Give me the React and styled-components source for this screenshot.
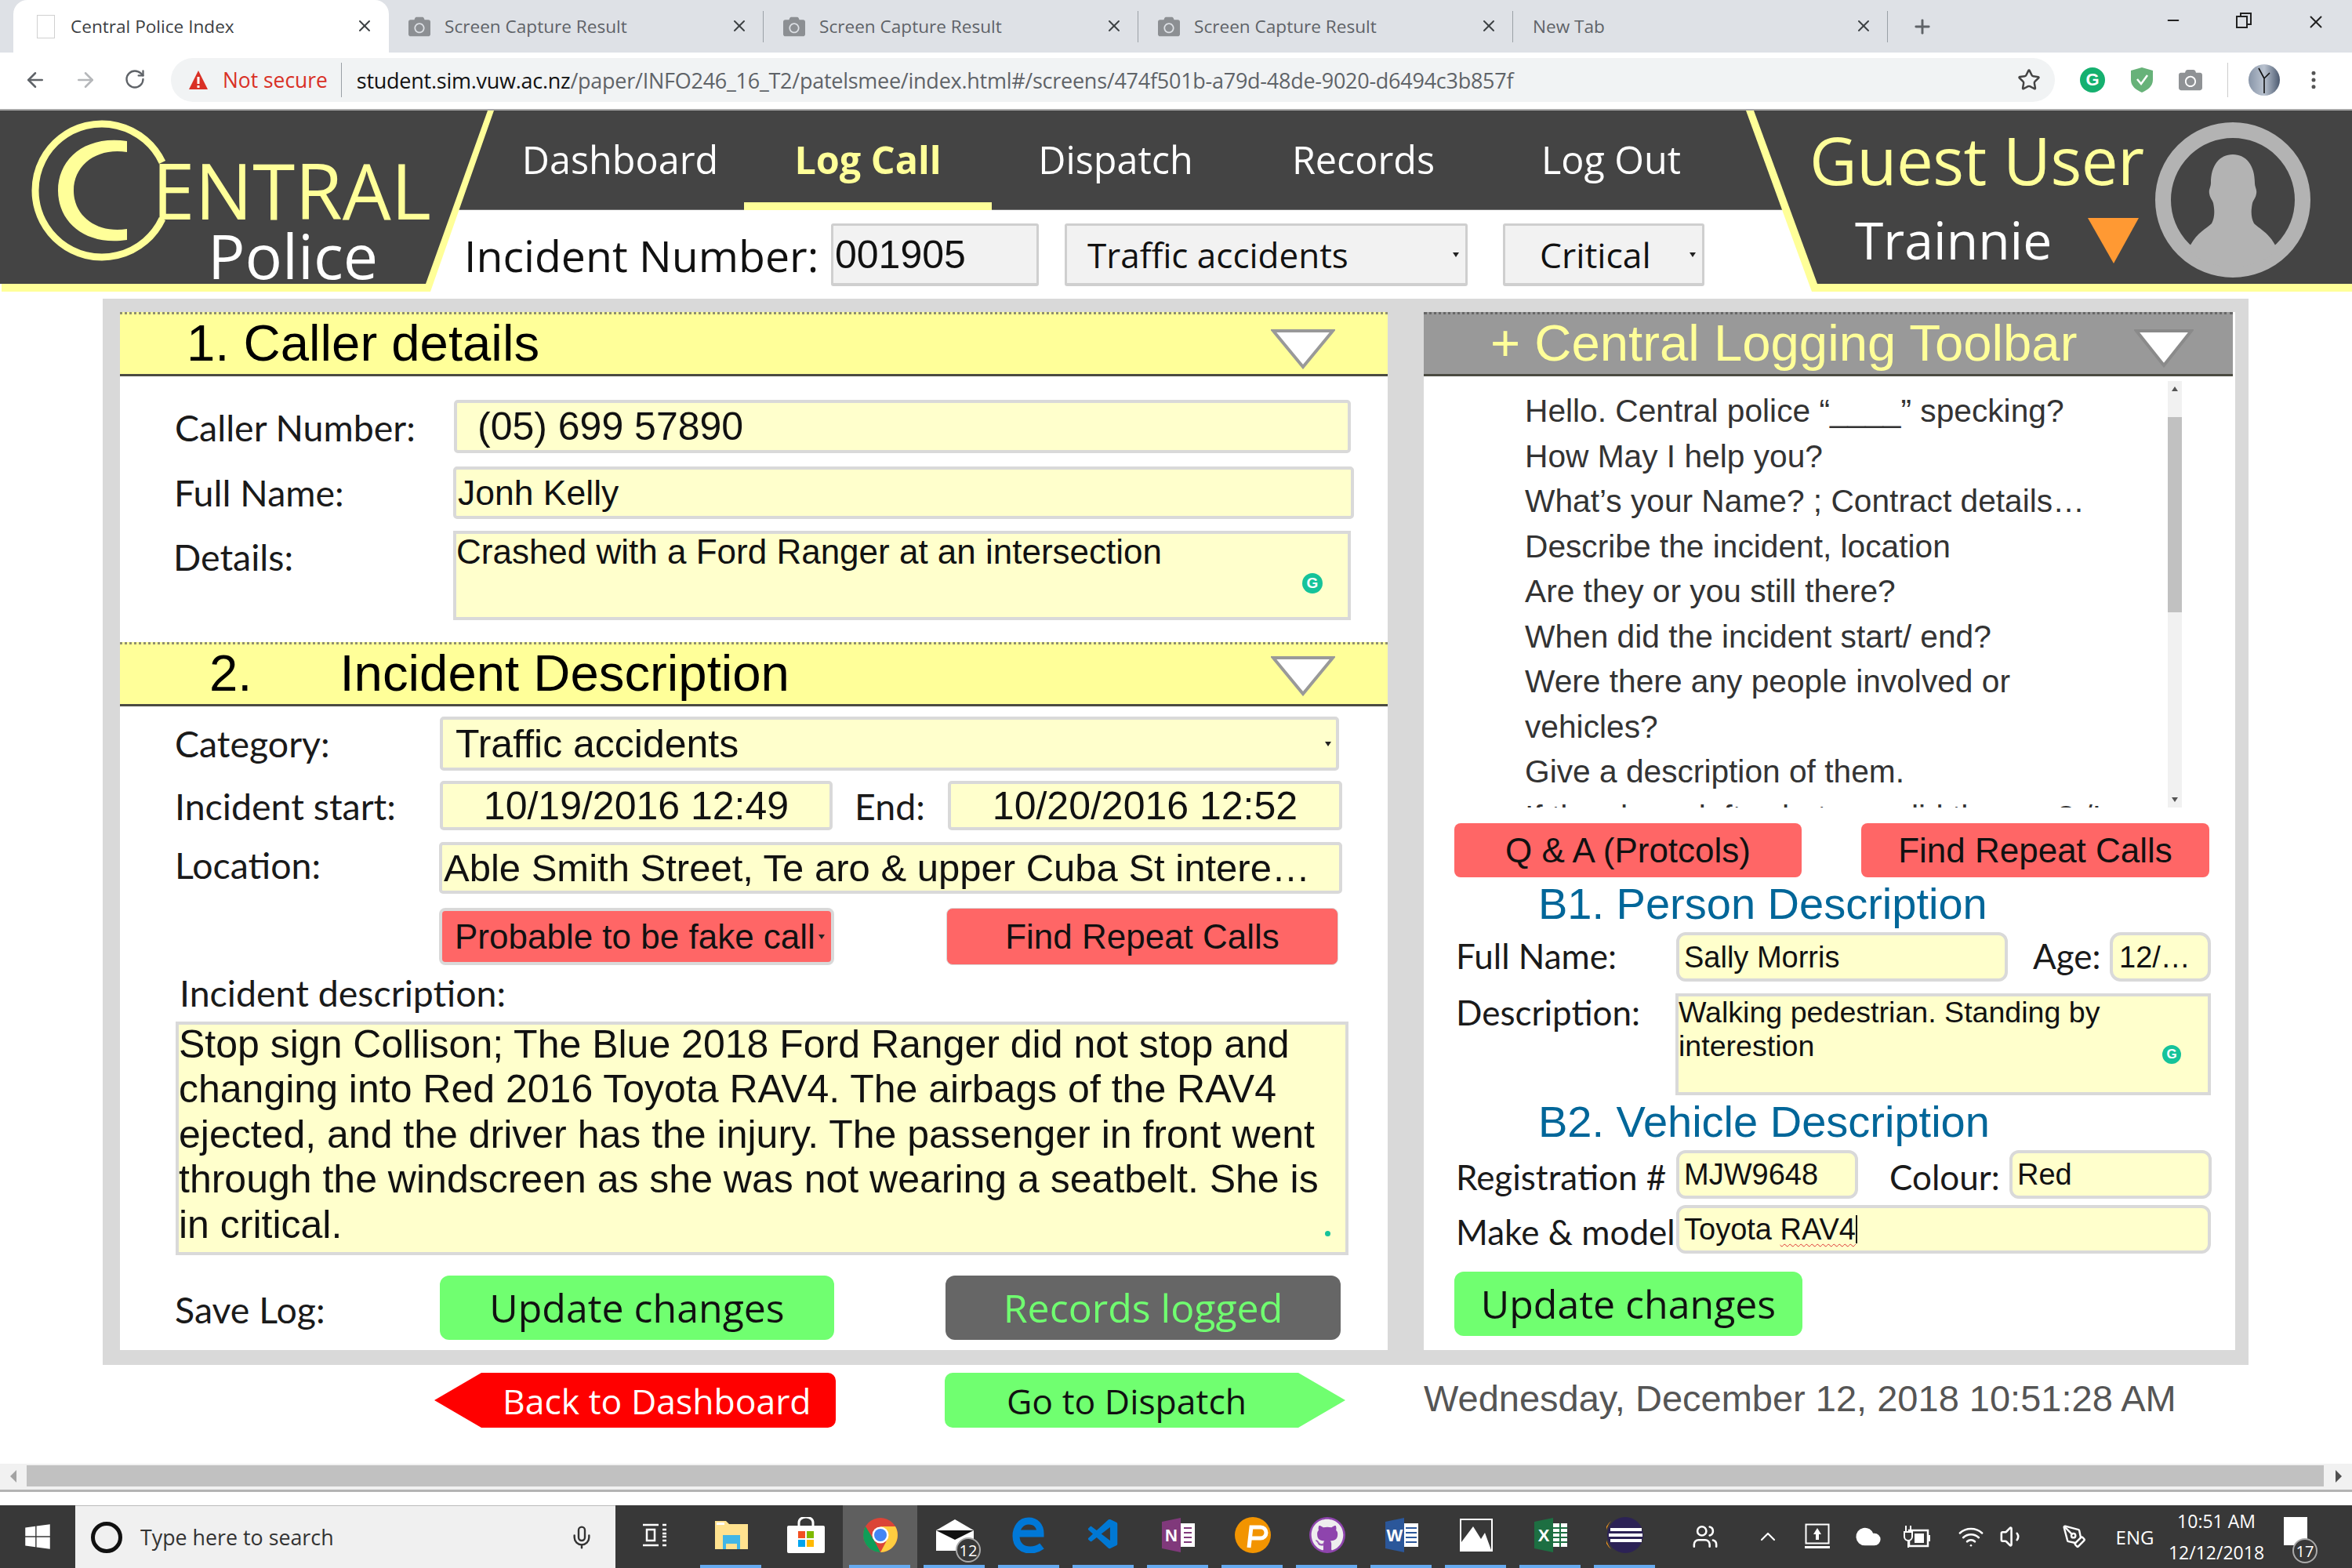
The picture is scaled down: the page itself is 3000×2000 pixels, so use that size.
import React from "react";
import styled, { createGlobalStyle } from "styled-components";
import { ArrowLeft, ArrowRight, RotateCw, Star, MoreVertical, Mic, Minus, Plus, X, Users, ChevronUp, Cloud, Wifi, Volume1, PenTool } from "lucide-react";
import { FaCamera, FaWindows, FaGithub } from "react-icons/fa";
import { VscVscode } from "react-icons/vsc";

const Y = "#ffff99";
const DARK = "#444444";
const SANS = '"Liberation Sans", Arial, sans-serif';
const OPEN = '"Open Sans", "Noto Sans", sans-serif';
const LATO = 'Lato, "Open Sans", sans-serif';

const Global = createGlobalStyle`
  html, body { margin: 0; padding: 0; background: #fff; width: 3000px; height: 2000px; overflow: hidden; }
  * { box-sizing: border-box; }
`;

const Page = styled.div`
  width: 3000px; height: 2000px; display: flex; flex-direction: column; overflow: hidden; background: #fff; font-family: ${SANS};
`;

/* browser chrome */
const TabStrip = styled.div`
  height: 67px; background: #dee1e6; display: flex; padding-left: 17px; position: relative; align-items: stretch;
`;
const Tab = styled.div`
  width: ${p => p.$w || 478}px; display: flex; align-items: center; padding: 0 0 0 ${p => p.$active ? 27 : 25}px; position: relative;
  background: ${p => p.$active ? "#fff" : "transparent"};
  border-radius: ${p => p.$active ? "18px 18px 0 0" : "0"};
  font: 400 22.6px ${OPEN}; color: ${p => p.$active ? "#3c4043" : "#5f6368"}; white-space: nowrap;
  ${p => p.$sep ? `&::after { content: ""; position: absolute; right: 0; top: 14px; height: 40px; width: 1px; background: #9aa0a6; }` : ""}
`;
const TabIconSlot = styled.span`
  width: 28px; height: 30px; margin-right: 18px; display: flex; align-items: center; justify-content: center; color: #8c8f93; flex: none;
`;
const TabPage = styled.span`
  width: 23px; height: 30px; background: #fff; border: 1px solid #d0d0d0; display: block;
`;
const TabClose = styled.span`
  position: absolute; right: 19px; top: 21px; display: flex; color: #3c4043;
`;
const NewTab = styled.span`
  width: 90px; display: flex; align-items: center; padding-left: 30px; color: #5f6368;
`;
const WinButtons = styled.div`
  margin-left: auto; display: flex; align-items: flex-start; padding-top: 15px; padding-right: 33px; gap: 68px; color: #222;
`;
const Toolbar = styled.div`
  height: 74px; display: flex; align-items: center; background: #fff; border-bottom: 2px solid #a8a8a8; padding-bottom: 2px;
`;
const NavIcons = styled.div`
  width: 218px; display: flex; padding-left: 30px; gap: 34px; color: #5f6368; flex: none;
`;
const Omni = styled.div`
  width: 2403px; height: 56px; border-radius: 28px; background: #f1f3f4; display: flex; align-items: center; padding-left: 22px; font: 400 27px ${OPEN}; position: relative; white-space: nowrap;
`;
const NotSecure = styled.span`
  color: #d93025; margin-left: 18px; padding-right: 17px; border-right: 1px solid #9aa0a6; font-size: 26.4px; line-height: 30px; height: 44px; display: flex; align-items: center;
`;
const Url = styled.span`
  color: #5f6368; margin-left: 19px; letter-spacing: -0.26px; b { color: #111; font-weight: 400; }
`;
const OmniStar = styled.span`
  position: absolute; right: 18px; top: 13px; display: flex; color: #444;
`;
const Extensions = styled.div`
  display: flex; align-items: center; gap: 32px; padding-left: 32px;
`;
const ExtBadge = styled.span`
  width: 32px; height: 32px; border-radius: 50%; background: ${p => p.$c}; color: #fff; display: flex; align-items: center; justify-content: center; font: 700 22px ${SANS};
`;
const ExtDivider = styled.span`
  width: 1px; height: 44px; background: #ccc; margin: 0 -14px 0 0;
`;
const Profile = styled.span`
  width: 40px; height: 40px; border-radius: 50%; background: linear-gradient(90deg, #8895a8, #b9c2cf 50%, #4c5a70); display: flex; align-items: center; justify-content: center; color: #111; margin-left: 8px; margin-right: -4px;
`;

/* app header */
const Header = styled.header`
  display: flex; height: 231px; flex: none;
`;
const LogoBlock = styled.div`
  width: 632px; margin-right: -72px; flex: none; position: relative; z-index: 2; background: ${Y};
  clip-path: polygon(0 0, 630px 0, 549px 231px, 2px 231px, 2px 221px, 0 221px);
  &::before { content: ""; position: absolute; inset: 0; background: ${DARK}; clip-path: polygon(0 0, 622px 0, 543px 221px, 0 221px); }
`;
const LogoMark = styled.svg`
  position: absolute; left: 32px; top: 5px; width: 190px; height: 190px;
`;
const LogoEntral = styled.div`
  position: absolute; left: 194px; top: 61px; font: 400 98px/80px ${OPEN}; color: ${Y};
`;
const LogoPolice = styled.div`
  position: absolute; left: 265px; top: 145px; font: 400 79px/80px ${OPEN}; color: #fff;
`;
const Middle = styled.div`
  width: 1715px; flex: none; display: flex; flex-direction: column;
`;
const Nav = styled.nav`
  height: 127px; background: ${DARK}; border-bottom: 1px solid #777; display: flex; padding-left: 73px;
`;
const NavItem = styled.div`
  width: 316px; height: 127px; display: flex; align-items: flex-start; justify-content: center; padding-top: 28px;
  font: ${p => p.$active ? 700 : 400} 48.5px/68px ${OPEN}; color: ${p => p.$active ? Y : "#fff"};
  border-bottom: ${p => p.$active ? `10px solid ${Y}` : "none"};
`;
const IncidentRow = styled.div`
  height: 104px; display: flex; align-items: center; padding: 10px 0 0 32px;
`;
const IncidentLabel = styled.div`
  width: 468px; font: 400 55.4px ${OPEN}; color: #111; white-space: nowrap;
`;
const GreyBox = styled.div`
  width: ${p => p.$w}px; height: 80px; margin-left: ${p => p.$ml || 0}px; background: #f2f2f2; border: 3px solid #cfcfcf; border-bottom-width: 4px; border-radius: 3px;
  display: flex; align-items: center; padding-left: ${p => p.$pl}px; font: 400 ${p => p.$fs}px ${p => p.$font}; color: #111; position: relative; white-space: nowrap;
`;
const Caret = styled.span`
  position: absolute; right: ${p => p.$r || 8}px; top: 50%; margin-top: -3px; width: 0; height: 0;
  border-left: 4px solid transparent; border-right: 4px solid transparent; border-top: 6px solid #222;
`;
const UserBlock = styled.div`
  width: 773px; margin-left: -48px; flex: none; position: relative; z-index: 2; display: flex; padding: 14px 0 0 81px; background: ${Y};
  clip-path: polygon(0 0, 773px 0, 773px 231px, 84px 231px);
  &::before { content: ""; position: absolute; inset: 0; background: ${DARK}; clip-path: polygon(10px 0, 773px 0, 773px 221px, 91px 221px); }
`;
const UserText = styled.div`
  width: 441px; flex: none; position: relative; display: flex; flex-direction: column; margin-top: -4px;
`;
const GuestName = styled.div`
  font: 400 83.5px/106px ${OPEN}; color: ${Y}; white-space: nowrap; letter-spacing: -0.5px;
`;
const RoleRow = styled.div`
  display: flex; align-items: center; padding-left: 58px; margin-top: 2px;
`;
const Role = styled.div`
  font: 400 66px/92px ${OPEN}; color: #fff; width: 297px;
`;
const TriangleBadge = styled.svg`
  width: 65px; height: 58px; flex: none; margin-top: 4px;
`;
const Avatar = styled.svg`
  width: 198px; height: 200px; flex: none; position: relative;
`;

/* main panel */
const Panel = styled.main`
  margin: 9px 0 0 131px; width: 2737px; height: 1360px; padding: 17px 17px 19px 22px; background: #d9d9d9; display: grid; grid-template-columns: 1617px 1035px; column-gap: 46px; flex: none;
`;
const Card = styled.section`
  background: #fff; display: flex; flex-direction: column; height: 1324px; overflow: hidden;
`;
const SectionBar = styled.div`
  height: 82px; margin-top: ${p => p.$mt || 0}px; flex: none; display: flex; align-items: center; position: relative;
  background: ${p => p.$grey ? "#999999" : Y}; border-top: 3px dotted ${p => p.$grey ? "#666" : "#8f8f70"}; border-bottom: 3px solid #4b4b42;
  font: 400 65.3px/76px ${SANS}; color: ${p => p.$grey ? Y : "#000"}; padding: 0 0 3px ${p => p.$pl}px; white-space: pre;
  width: ${p => p.$w ? p.$w + "px" : "auto"};
`;
const SectionGap = styled.span`
  display: inline-block; width: ${p => p.$w}px;
`;
const Chevron = styled.svg`
  position: absolute; left: ${p => p.$x}px; top: ${p => p.$y}px; width: ${p => p.$w}px; height: ${p => p.$h}px;
`;
const Row = styled.div`
  display: flex; align-items: ${p => p.$top ? "flex-start" : "center"}; height: ${p => p.$h}px; margin-top: ${p => p.$mt}px; margin-left: ${p => p.$ml || 0}px; flex: none;
`;
const Label = styled.div`
  width: ${p => p.$w}px; padding-left: ${p => p.$pl || 0}px; margin-left: ${p => p.$ml || 0}px; margin-top: ${p => p.$top || 0}px; flex: none; font: 400 ${p => p.$fs || 46.5}px/56px ${LATO}; color: #1a1a1a; white-space: nowrap;
`;
const Field = styled.div`
  width: ${p => p.$w}px; height: ${p => p.$h ? p.$h + "px" : "100%"}; margin-left: ${p => p.$ml || 0}px; flex: none; position: relative;
  background: #ffffcc; border: 4px solid #d9d9d9; border-radius: ${p => p.$square ? 0 : (p.$r || 5)}px;
  display: ${p => p.$block ? "block" : "flex"}; align-items: center; justify-content: ${p => p.$center ? "center" : "flex-start"};
  padding-left: ${p => p.$pl ?? 8}px; padding-right: ${p => p.$pr || 4}px;
  font: 400 ${p => p.$fs || 50}px/${p => p.$lh || 60}px ${SANS}; color: #111; white-space: ${p => p.$wrap ? "normal" : "nowrap"}; overflow: hidden;
`;
const FieldBody = styled.div`
  margin-top: ${p => p.$mt}px;
`;
const Ellipsis = styled.span`
  overflow: hidden; text-overflow: ellipsis; white-space: nowrap; display: block; width: 100%;
`;
const GrammarDot = styled.span`
  position: absolute; right: ${p => p.$r}px; top: ${p => p.$t}px; width: ${p => p.$s}px; height: ${p => p.$s}px; border-radius: 50%; background: #15c39a; color: #fff; display: flex; align-items: center; justify-content: center; font: 700 ${p => Math.round(p.$s * 0.72)}px ${SANS};
`;
const ActionButton = styled.div`
  width: ${p => p.$w}px; height: ${p => p.$h || 73}px; margin-left: ${p => p.$ml || 0}px; flex: none; border-radius: ${p => p.$r || 8}px; position: relative;
  background: ${p => p.$bg}; color: ${p => p.$fg || "#111"}; border: ${p => p.$bd || "none"};
  display: flex; align-items: center; justify-content: ${p => p.$left ? "flex-start" : "center"}; padding-left: ${p => p.$left || 0}px;
  font: 400 ${p => p.$fs || 44}px ${p => p.$font || SANS}; white-space: nowrap;
`;
const Footer = styled.div`
  display: flex; align-items: center; height: 70px; margin-top: 10px; padding-left: 554px; flex: none;
`;
const ArrowButton = styled.div`
  height: 70px; width: ${p => p.$w}px; margin-left: ${p => p.$ml}px; flex: none; position: relative; display: flex; align-items: center;
  background: ${p => p.$bg}; color: ${p => p.$fg}; font: 400 44.5px ${OPEN}; white-space: nowrap; padding-left: ${p => p.$pl}px;
  border-radius: ${p => p.$left ? "0 10px 10px 0" : "10px 0 0 10px"};
  &::before { content: ""; position: absolute; top: 0; ${p => p.$left ? "right: 100%;" : "left: 100%;"} width: 0; height: 0;
    border-top: 35px solid transparent; border-bottom: 35px solid transparent;
    ${p => p.$left ? `border-right: 60px solid ${p.$bg};` : `border-left: 60px solid ${p.$bg};`} }
`;
const DateText = styled.div`
  margin-left: 160px; font: 400 47px ${SANS}; color: #555; white-space: nowrap; margin-top: -6px;
`;

/* script box */
const ScriptBox = styled.div`
  height: 544px; margin-top: 6px; flex: none; position: relative; overflow: hidden; padding: 10px 0 0 129px;
`;
const ScriptLine = styled.div`
  font: 400 40.7px/57.5px ${SANS}; color: #333; white-space: nowrap;
`;
const ScrollTrack = styled.div`
  position: absolute; left: 949px; top: 0; width: 18px; height: 544px; background: #f1f1f1;
`;
const ScrollThumb = styled.div`
  position: absolute; left: 0; top: 46px; width: 18px; height: 249px; background: #c1c1c1;
`;
const ScrollArrow = styled.span`
  position: absolute; left: 5px; ${p => p.$up ? "top: 7px; border-bottom: 6px solid #555;" : "bottom: 7px; border-top: 6px solid #555;"} width: 0; height: 0;
  border-left: 4px solid transparent; border-right: 4px solid transparent;
`;
const SubHead = styled.div`
  margin: ${p => p.$mt}px 0 0 146px; font: 400 56px/68px ${SANS}; color: #006699; white-space: nowrap; height: 68px; flex: none;
`;
const Caretline = styled.span`
  display: inline-block; width: 2px; height: 36px; background: #111; vertical-align: -5px;
`;
const Squiggle = styled.span`
  text-decoration: underline wavy #d33; text-decoration-thickness: 1px; text-underline-offset: 5px;
`;

/* page scrollbar + taskbar */
const HScroll = styled.div`
  height: 36px; margin-top: 46px; background: #f1f1f1; border-bottom: 3px solid #b3b3b3; display: flex; flex: none; padding: 2px 0 4px; align-items: stretch; position: relative;
`;
const HThumb = styled.div`
  margin-left: 34px; width: 2930px; background: #c1c1c1;
`;
const HArrow = styled.span`
  position: absolute; top: 8px; ${p => p.$left ? "left: 13px; border-right: 8px solid #a3a3a3;" : "right: 13px; border-left: 8px solid #505050;"}
  border-top: 8px solid transparent; border-bottom: 8px solid transparent; width: 0; height: 0;
`;
const Taskbar = styled.footer`
  height: 80px; margin-top: 17px; background: #383838; display: flex; align-items: stretch; flex: none; color: #fff;
`;
const StartCell = styled.div`
  width: 96px; display: flex; align-items: center; justify-content: center; color: #fff; flex: none;
`;
const Search = styled.div`
  width: 689px; background: #f0f0f0; border-top: 1px solid #bbb; display: flex; align-items: center; padding-left: 20px; font: 400 26.8px ${OPEN}; color: #333; position: relative; flex: none;
`;
const Cortana = styled.span`
  width: 40px; height: 40px; border-radius: 50%; border: 5px solid #111; margin-right: 23px; flex: none;
`;
const SearchMic = styled.span`
  position: absolute; right: 27px; top: 24px; display: flex; color: #333;
`;
const AppCell = styled.div`
  width: ${p => p.$w || 95}px; flex: none; display: flex; align-items: center; justify-content: center; position: relative;
  background: ${p => p.$active ? "#5f5f5f" : "transparent"};
  padding-bottom: 4px;
  ${p => p.$run ? `&::after { content: ""; position: absolute; bottom: 0; left: 8px; right: 9px; height: 4px; background: #66aaf0; }` : ""}
`;
const Disc = styled.span`
  width: 46px; height: 46px; background: #8e44ad; border-radius: 23px; color: #eee; display: flex; align-items: center; justify-content: center;
`;
const CountBadge = styled.span`
  position: absolute; right: ${p => p.$right ?? 14}px; bottom: ${p => p.$bottom ?? 7}px; width: 32px; height: 32px; border-radius: 50%; background: #383838; border: 2px solid #aaa; color: #fff; font: 400 20px ${OPEN}; display: flex; align-items: center; justify-content: center;
`;
const Tray = styled.div`
  margin-left: auto; display: flex; align-items: center; padding-right: 42px;
`;
const TrayCell = styled.div`
  width: ${p => p.$w || 50}px; margin-left: ${p => p.$ml || 0}px; height: 80px; flex: none; display: flex; align-items: center; justify-content: center; color: #fff; position: relative;
  font: 400 24px ${OPEN};
`;
const Clock = styled.div`
  font: 400 23px/40px ${OPEN}; text-align: center; color: #fff; white-space: nowrap;
`;
const Notif = styled.span`
  width: 30px; height: 36px; background: #fff; display: block; margin-top: -14px; margin-left: -10px;
`;

const Tri = ({ x, y, w, h, fill = "#fff", stroke = "#999" }) => (
  <Chevron $x={x} $y={y} $w={w} $h={h} viewBox={`0 0 ${w} ${h}`}>
    <polygon points={`3,3 ${w - 3},3 ${w / 2},${h - 3}`} fill={fill} stroke={stroke} strokeWidth="4" />
  </Chevron>
);

const ChromeLogo = () => (
  <svg width="46" height="46" viewBox="0 0 46 46">
    <circle cx="23" cy="23" r="22" fill="#db4437" />
    <path d="M23 45 A22 22 0 0 1 4 12 L15 30 Z" fill="#0f9d58" />
    <path d="M23 45 A22 22 0 0 0 42 12 L23 12 L31 30 Z" fill="#ffcd40" />
    <circle cx="23" cy="23" r="10.5" fill="#fff" />
    <circle cx="23" cy="23" r="8" fill="#4285f4" />
  </svg>
);

const Explorer = () => (
  <svg width="42" height="36" viewBox="0 0 42 36">
    <path d="M0 0h14l4 4h24v32H0z" fill="#ffe28f" />
    <rect x="2" y="2" width="10" height="3" fill="#fff" />
    <path d="M10 36V18h22v18h-4v-7H14v7z" fill="#41b6e6" />
    <rect x="10" y="18" width="22" height="8" fill="#41b6e6" />
  </svg>
);

const Store = () => (
  <svg width="48" height="46" viewBox="0 0 48 46">
    <path d="M15 12V7a9 7 0 0 1 18 0v5" fill="none" stroke="#fff" strokeWidth="3" />
    <rect x="0" y="11" width="48" height="35" fill="#fff" rx="2" />
    <rect x="14" y="18" width="9" height="9" fill="#f25022" />
    <rect x="25" y="18" width="9" height="9" fill="#7fba00" />
    <rect x="14" y="29" width="9" height="9" fill="#00a4ef" />
    <rect x="25" y="29" width="9" height="9" fill="#ffb900" />
  </svg>
);

const Mail = () => (
  <svg width="48" height="40" viewBox="0 0 48 40">
    <path d="M0 14 24 0l24 14v26H0z" fill="#fff" />
    <path d="M0 14 24 26 48 14" fill="#111" />
  </svg>
);

const EdgeE = () => (
  <svg width="44" height="46" viewBox="0 0 44 46">
    <path d="M9 21h27c0-10-6-16-15-16C11 5 5 14 5 24c0 12 8 18 18 18 6 0 11-2 15-5" fill="none" stroke="#0078d7" strokeWidth="9" />
  </svg>
);

const Eclipse = () => (
  <svg width="48" height="46" viewBox="0 0 48 46">
    <circle cx="24" cy="23" r="23" fill="#2c2255" />
    <path d="M6 5 A23 23 0 0 0 6 41 A20 24 0 0 1 6 5" fill="#f7941e" />
    <rect x="5" y="14" width="40" height="4" fill="#fff" />
    <rect x="3" y="21" width="43" height="4" fill="#fff" />
    <rect x="5" y="28" width="40" height="4" fill="#fff" />
  </svg>
);

const Photos = () => (
  <svg width="42" height="42" viewBox="0 0 42 42">
    <rect width="42" height="42" fill="#fff" />
    <rect x="2" y="2" width="38" height="6" fill="#383838" />
    <path d="M2 8h38v32l-8-22-5 8-10-16L2 30z" fill="#383838" />
  </svg>
);

const DocIcon = ({ bg, letter, rows }) => (
  <svg width="42" height="44" viewBox="0 0 42 44">
    <path d="M0 5 24 0v44L0 39z" fill={bg} />
    <rect x="24" y="7" width="18" height="30" fill="#fff" />
    <path d={rows} stroke={bg} strokeWidth="2" />
    <text x="12" y="30" fontSize="22" fontFamily="Liberation Sans" fontWeight="700" fill="#fff" textAnchor="middle">{letter}</text>
  </svg>
);

const Orange = () => (
  <svg width="46" height="48" viewBox="0 0 46 48">
    <circle cx="23" cy="24" r="23" fill="#f29400" />
    <path d="M18 40 21 14h12a6 6 0 0 1 0 14H21" fill="none" stroke="#fff" strokeWidth="5" />
  </svg>
);

const UploadTray = () => (
  <svg width="32" height="34" viewBox="0 0 32 34">
    <rect x="1.5" y="1.5" width="29" height="24" fill="none" stroke="#fff" strokeWidth="2" />
    <path d="M16 6l5 8h-3v7h-4v-7h-3z" fill="#fff" />
    <rect x="0" y="29" width="32" height="3" fill="#fff" />
  </svg>
);

const Battery = () => (
  <svg width="36" height="36" viewBox="0 0 36 36">
    <rect x="8" y="10" width="24" height="20" fill="none" stroke="#fff" strokeWidth="2.5" />
    <rect x="32" y="16" width="3" height="8" fill="#fff" />
    <path d="M2 12h10v6a5 5 0 0 1-10 0zM4 4v8M10 4v8M7 22v10" stroke="#fff" strokeWidth="2" fill="#383838" />
    <rect x="15" y="14" width="12" height="12" fill="#fff" />
  </svg>
);

const Logo = () => (
  <LogoMark viewBox="0 0 190 190">
    <path d="M175 61 A85 85 0 1 0 175 133" fill="none" stroke={Y} strokeWidth="9" />
    <path d="M130 34 C 75 26 42 58 42 97 C 42 136 75 168 130 160 L 130 146 C 92 152 62 130 62 97 C 62 64 92 42 130 48 Z" fill={Y} />
  </LogoMark>
);

const AvatarArt = () => (
  <Avatar viewBox="0 0 198 200">
    <defs><clipPath id="avatarClip"><circle cx="99" cy="100" r="86" /></clipPath></defs>
    <circle cx="99" cy="100" r="89" fill="none" stroke="#b3b3b3" strokeWidth="20" />
    <path clipPath="url(#avatarClip)" d="M99 42 C 116 42 127 56 127 78 C 127 84 130 86 129 92 C 128 98 125 100 124 104 C 122 114 122 122 126 130 C 134 138 154 146 159 176 L 159 200 L 39 200 L 39 176 C 44 146 64 138 72 130 C 76 122 76 114 74 104 C 73 100 70 98 69 92 C 68 86 71 84 71 78 C 71 56 82 42 99 42 Z" fill="#b3b3b3" />
  </Avatar>
);

export default function App() {
  return (
    <Page>
      <Global />
      <TabStrip>
        <Tab $active $w={479}>
          <TabIconSlot><TabPage /></TabIconSlot>Central Police Index
          <TabClose><X size={24} strokeWidth={2} /></TabClose>
        </Tab>
        <Tab $sep><TabIconSlot><FaCamera size={28} /></TabIconSlot>Screen Capture Result<TabClose><X size={24} strokeWidth={2} /></TabClose></Tab>
        <Tab $sep><TabIconSlot><FaCamera size={28} /></TabIconSlot>Screen Capture Result<TabClose><X size={24} strokeWidth={2} /></TabClose></Tab>
        <Tab $sep><TabIconSlot><FaCamera size={28} /></TabIconSlot>Screen Capture Result<TabClose><X size={24} strokeWidth={2} /></TabClose></Tab>
        <Tab $sep>New Tab<TabClose><X size={24} strokeWidth={2} /></TabClose></Tab>
        <NewTab><Plus size={28} strokeWidth={2.5} /></NewTab>
        <WinButtons>
          <Minus size={22} strokeWidth={2} />
          <svg width="22" height="22" viewBox="0 0 22 22"><rect x="2" y="6" width="13" height="14" fill="none" stroke="#222" strokeWidth="2" /><path d="M7 6V2h13v14h-5" fill="none" stroke="#222" strokeWidth="2" /></svg>
          <X size={26} strokeWidth={1.8} />
        </WinButtons>
      </TabStrip>
      <Toolbar>
        <NavIcons>
          <ArrowLeft size={30} />
          <ArrowRight size={30} color="#b5b7ba" />
          <RotateCw size={28} />
        </NavIcons>
        <Omni>
          <svg width="26" height="26" viewBox="0 0 26 26"><path d="M13 1 25 25H1z" fill="#d93025" /><rect x="11.5" y="9" width="3" height="9" fill="#fff" /><rect x="11.5" y="20" width="3" height="3" fill="#fff" /></svg>
          <NotSecure>Not secure</NotSecure>
          <Url><b>student.sim.vuw.ac.nz</b>/paper/INFO246_16_T2/patelsmee/index.html#/screens/474f501b-a79d-48de-9020-d6494c3b857f</Url>
          <OmniStar><Star size={30} strokeWidth={2} /></OmniStar>
        </Omni>
        <Extensions>
          <ExtBadge $c="#15b06f">G</ExtBadge>
          <svg width="30" height="34" viewBox="0 0 30 34"><path d="M15 1 29 5v12c0 8-7 13-14 16C8 30 1 25 1 17V5z" fill="#67b279" /><path d="M9 16l5 6 8-11" fill="none" stroke="#fff" strokeWidth="2.5" /></svg>
          <FaCamera size={30} color="#8f9295" />
          <ExtDivider />
          <Profile><svg width="28" height="36" viewBox="0 0 28 36"><path d="M14 16 7 3M14 16 21 9M14 16v19" stroke="#111" strokeWidth="1.6" /></svg></Profile>
          <MoreVertical size={30} color="#555" />
        </Extensions>
      </Toolbar>

      <Header>
        <LogoBlock>
          <Logo />
          <LogoEntral>ENTRAL</LogoEntral>
          <LogoPolice>Police</LogoPolice>
        </LogoBlock>
        <Middle>
          <Nav>
            <NavItem>Dashboard</NavItem>
            <NavItem $active>Log Call</NavItem>
            <NavItem>Dispatch</NavItem>
            <NavItem>Records</NavItem>
            <NavItem>Log Out</NavItem>
          </Nav>
          <IncidentRow>
            <IncidentLabel>Incident Number:</IncidentLabel>
            <GreyBox $w={265} $pl={2} $fs={50} $font={SANS}>001905</GreyBox>
            <GreyBox $w={514} $ml={33} $pl={26} $fs={44} $font={OPEN}>Traffic accidents<Caret /></GreyBox>
            <GreyBox $w={257} $ml={45} $pl={44} $fs={44.5} $font={OPEN}>Critical<Caret /></GreyBox>
          </IncidentRow>
        </Middle>
        <UserBlock>
          <UserText>
            <GuestName>Guest User</GuestName>
            <RoleRow>
              <Role>Trainnie</Role>
              <TriangleBadge viewBox="0 0 65 58"><polygon points="0,0 65,0 33,58" fill="#ff9933" /></TriangleBadge>
            </RoleRow>
          </UserText>
          <AvatarArt />
        </UserBlock>
      </Header>

      <Panel>
        <Card>
          <SectionBar $pl={85}>1. Caller details<Tri x={1468} y={18} w={82} h={52} /></SectionBar>
          <Row $h={68} $mt={30}>
            <Label $w={426} $pl={70} $top={2}>Caller Number:</Label>
            <Field $w={1144} $pl={26} $fs={50}>(05) 699 57890</Field>
          </Row>
          <Row $h={67} $mt={17}>
            <Label $w={425} $pl={69} $top={-2}>Full Name:</Label>
            <Field $w={1149} $pl={2} $fs={44.5}>Jonh Kelly</Field>
          </Row>
          <Row $h={114} $mt={15} $top>
            <Label $w={425} $pl={68} $top={5}>Details:</Label>
            <Field $w={1145} $h={114} $square $block $wrap $pl={0} $fs={44} $lh={48}>
              <FieldBody $mt={-1}>Crashed with a Ford Ranger at an intersection</FieldBody>
              <GrammarDot $r={32} $t={50} $s={26}>G</GrammarDot>
            </Field>
          </Row>
          <SectionBar $mt={28} $pl={114}>2.<SectionGap $w={112} />Incident Description<Tri x={1468} y={14} w={82} h={52} /></SectionBar>
          <Row $h={69} $mt={13}>
            <Label $w={408} $pl={70} $top={-2}>Category:</Label>
            <Field $w={1147} $pl={16} $fs={50}>Traffic accidents<Caret $r={6} /></Field>
          </Row>
          <Row $h={63} $mt={13}>
            <Label $w={408} $pl={70}>Incident start:</Label>
            <Field $w={501} $center $pl={4} $pr={0} $fs={50}>10/19/2016 12:49</Field>
            <Label $w={119} $ml={28}>End:</Label>
            <Field $w={503} $center $pl={4} $pr={0} $fs={50}>10/20/2016 12:52</Field>
          </Row>
          <Row $h={66} $mt={15}>
            <Label $w={407} $pl={70} $top={-8}>Location:</Label>
            <Field $w={1152} $pl={2} $pr={28} $fs={49}><Ellipsis>Able Smith Street, Te aro &amp; upper Cuba St interection</Ellipsis></Field>
          </Row>
          <Row $h={73} $mt={18} $ml={407}>
            <ActionButton $w={504} $bg="#ff6666" $bd="4px solid #d9d9d9" $left={16}>Probable to be fake call<Caret $r={8} /></ActionButton>
            <ActionButton $w={500} $ml={143} $bg="#ff6666" $bd="1px solid #d9d9d9">Find Repeat Calls</ActionButton>
          </Row>
          <Row $h={54} $mt={11}>
            <Label $w={800} $pl={76} $top={-6}>Incident description:</Label>
          </Row>
          <Row $h={298} $mt={7} $ml={71}>
            <Field $w={1496} $square $block $wrap $pl={0} $pr={0} $fs={50} $lh={57.4}>
              <FieldBody $mt={-3}>Stop sign Collison; The Blue 2018 Ford Ranger did not stop and changing into Red 2016 Toyota RAV4. The airbags of the RAV4 ejected, and the driver has the injury. The passenger in front went through the windscreen as she was not wearing a seatbelt. She is in critical.</FieldBody>
              <GrammarDot $r={19} $t={263} $s={7} />
            </Field>
          </Row>
          <Row $h={82} $mt={26}>
            <Label $w={408} $pl={70} $top={4}>Save Log:</Label>
            <ActionButton $w={503} $h={82} $r={12} $bg="#70ff70" $font={OPEN} $fs={50}>Update changes</ActionButton>
            <ActionButton $w={504} $h={82} $r={12} $ml={142} $bg="#666666" $fg="#70ff70" $font={OPEN} $fs={50}>Records logged</ActionButton>
          </Row>
        </Card>

        <Card>
          <SectionBar $grey $w={1032} $pl={85}>+ Central Logging Toolbar<Tri x={906} y={18} w={76} h={50} stroke="#8a8a8a" /></SectionBar>
          <ScriptBox>
            <ScriptLine>Hello. Central police “____” specking?</ScriptLine>
            <ScriptLine>How May I help you?</ScriptLine>
            <ScriptLine>What’s your Name? ; Contract details…</ScriptLine>
            <ScriptLine>Describe the incident, location</ScriptLine>
            <ScriptLine>Are they or you still there?</ScriptLine>
            <ScriptLine>When did the incident start/ end?</ScriptLine>
            <ScriptLine>Were there any people involved or</ScriptLine>
            <ScriptLine>vehicles?</ScriptLine>
            <ScriptLine>Give a description of them.</ScriptLine>
            <ScriptLine>If they have left, what way did they go? /I</ScriptLine>
            <ScrollTrack>
              <ScrollArrow $up />
              <ScrollThumb />
              <ScrollArrow />
            </ScrollTrack>
          </ScriptBox>
          <Row $h={69} $mt={20} $ml={39}>
            <ActionButton $w={443} $h={69} $bg="#ff6666">Q &amp; A (Protcols)</ActionButton>
            <ActionButton $w={444} $h={69} $ml={76} $bg="#ff6666">Find Repeat Calls</ActionButton>
          </Row>
          <SubHead $mt={0}>B1. Person Description</SubHead>
          <Row $h={63} $mt={2}>
            <Label $w={322} $pl={41} $fs={44} $top={-4}>Full Name:</Label>
            <Field $w={423} $r={12} $pl={6} $fs={38} $lh={46}>Sally Morris</Field>
            <Label $w={98} $ml={32} $fs={44} $top={-4}>Age:</Label>
            <Field $w={129} $r={14} $fs={38} $lh={46}>12/…</Field>
          </Row>
          <Row $h={130} $mt={15} $top>
            <Label $w={321} $pl={41} $fs={44} $top={-4}>Description:</Label>
            <Field $w={683} $h={130} $square $block $wrap $pl={0} $fs={37.6} $lh={43}>
              <FieldBody $mt={-1}>Walking pedestrian. Standing by interestion</FieldBody>
              <GrammarDot $r={34} $t={62} $s={24}>G</GrammarDot>
            </Field>
          </Row>
          <SubHead $mt={0}>B2. Vehicle Description</SubHead>
          <Row $h={62} $mt={2}>
            <Label $w={322} $pl={41} $fs={44} $top={6}>Registration #</Label>
            <Field $w={232} $r={12} $pl={6} $fs={38} $lh={46}>MJW9648</Field>
            <Label $w={153} $ml={40} $fs={44} $top={6}>Colour:</Label>
            <Field $w={258} $r={12} $pl={6} $fs={38} $lh={46}>Red</Field>
          </Row>
          <Row $h={62} $mt={8}>
            <Label $w={322} $pl={41} $fs={44} $top={6}>Make &amp; model</Label>
            <Field $w={682} $r={12} $pl={6} $fs={38} $lh={46}><span>Toyota <Squiggle>RAV4</Squiggle><Caretline /></span></Field>
          </Row>
          <Row $h={82} $mt={23} $ml={39}>
            <ActionButton $w={444} $h={82} $r={12} $bg="#70ff70" $font={OPEN} $fs={50}>Update changes</ActionButton>
          </Row>
        </Card>
      </Panel>

      <Footer>
        <ArrowButton $left $ml={60} $w={452} $pl={27} $bg="#ff0000" $fg="#fff">Back to Dashboard</ArrowButton>
        <ArrowButton $ml={139} $w={451} $pl={79} $bg="#70ff70" $fg="#111">Go to Dispatch</ArrowButton>
        <DateText>Wednesday, December 12, 2018 10:51:28 AM</DateText>
      </Footer>

      <HScroll>
        <HArrow $left />
        <HThumb />
        <HArrow />
      </HScroll>

      <Taskbar>
        <StartCell><FaWindows size={36} /></StartCell>
        <Search>
          <Cortana />Type here to search
          <SearchMic><Mic size={32} strokeWidth={1.8} /></SearchMic>
        </Search>
        <AppCell $w={100}>
          <svg width="32" height="30" viewBox="0 0 32 30"><path d="M1 2h20M1 28h20M6 8h10v14H6zM26 8h5M26 13h5M26 17h5M26 22h5M26 2h5M26 28h5" stroke="#fff" strokeWidth="2.5" fill="none" /></svg>
        </AppCell>
        <AppCell $run><Explorer /></AppCell>
        <AppCell><Store /></AppCell>
        <AppCell $run $active><ChromeLogo /></AppCell>
        <AppCell $run><Mail /><CountBadge>12</CountBadge></AppCell>
        <AppCell $run><EdgeE /></AppCell>
        <AppCell $run><VscVscode size={46} color="#0078d4" /></AppCell>
        <AppCell $run><DocIcon bg="#80397b" letter="N" rows="M28 13h10M28 19h10M28 25h10M28 31h10" /></AppCell>
        <AppCell $run><Orange /></AppCell>
        <AppCell $run><Disc><FaGithub size={42} /></Disc></AppCell>
        <AppCell $run><DocIcon bg="#2b579a" letter="W" rows="M26 13h14M26 19h14M26 25h14M26 31h14" /></AppCell>
        <AppCell $run><Photos /></AppCell>
        <AppCell $run><DocIcon bg="#1d6f42" letter="X" rows="M24 13h18M24 19h18M24 25h18M24 31h18M33 7v30" /></AppCell>
        <AppCell $run><Eclipse /></AppCell>
        <Tray>
          <TrayCell><Users size={34} strokeWidth={1.8} /></TrayCell>
          <TrayCell $ml={30}><ChevronUp size={32} strokeWidth={1.6} /></TrayCell>
          <TrayCell $ml={13}><UploadTray /></TrayCell>
          <TrayCell $ml={15}><Cloud size={34} fill="#fff" /></TrayCell>
          <TrayCell $ml={12}><Battery /></TrayCell>
          <TrayCell $ml={19}><Wifi size={34} strokeWidth={1.8} /></TrayCell>
          <TrayCell $ml={3}><Volume1 size={34} strokeWidth={1.8} /></TrayCell>
          <TrayCell $ml={29}><PenTool size={32} strokeWidth={1.8} /></TrayCell>
          <TrayCell $ml={27}>ENG</TrayCell>
          <TrayCell $ml={19} $w={120}><Clock>10:51 AM<br />12/12/2018</Clock></TrayCell>
          <TrayCell $ml={21}><Notif /><CountBadge $right={2} $bottom={6}>17</CountBadge></TrayCell>
        </Tray>
      </Taskbar>
    </Page>
  );
}
